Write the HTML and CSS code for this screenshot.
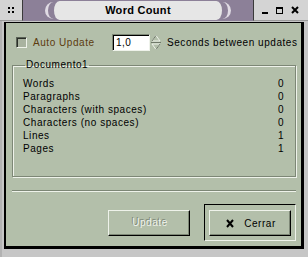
FILE: index.html
```html
<!DOCTYPE html>
<html lang="en">
<head>
    <meta charset="UTF-8">
    <title>Word Count</title>
    <link rel="stylesheet" href="styles.css">
</head>
<body>
    <div class="window">
        <div class="titlebar">
            <div class="tb-left">
                <span class="dots"><i></i><i></i><i></i><i></i></span>
            </div>
            <div class="tb-mid">
                <div class="pill">Word Count</div>
            </div>
            <div class="tb-right">
                <span class="ico-min"></span>
                <span class="ico-max"></span>
                <svg class="ico-close" width="8" height="8" viewBox="0 0 8 8">
                    <path d="M1 1L7 7M7 1L1 7" stroke="#000" stroke-width="2"/>
                </svg>
            </div>
        </div>

        <div class="frame-wrap">
            <div class="client">
                <div class="top-row">
                    <span class="checkbox"></span>
                    <span class="auto-label">Auto Update</span>
                    <span class="entry">1,0</span>
                    <svg class="spin" width="10" height="17" viewBox="0 0 10 17">
                        <path d="M5 1.5L9 7H1Z" fill="none" stroke="#eef2ea"/>
                        <path d="M5 1.5L1 7" stroke="#6f7869"/>
                        <path d="M0 8.5H10" stroke="#6f7869"/>
                        <path d="M1 10H9L5 15.5Z" fill="none" stroke="#eef2ea"/>
                        <path d="M9 10L5 15.5" stroke="#6f7869"/>
                    </svg>
                    <span class="seconds">Seconds between updates</span>
                </div>

                <fieldset class="doc">
                    <legend>Documento1</legend>
                    <div class="row"><span>Words</span><span>0</span></div>
                    <div class="row"><span>Paragraphs</span><span>0</span></div>
                    <div class="row"><span>Characters (with spaces)</span><span>0</span></div>
                    <div class="row"><span>Characters (no spaces)</span><span>0</span></div>
                    <div class="row"><span>Lines</span><span>1</span></div>
                    <div class="row"><span>Pages</span><span>1</span></div>
                </fieldset>

                <div class="separator"></div>

                <div class="buttons">
                    <button class="btn disabled">Update</button>
                    <div class="default-ring">
                        <button class="btn">
                            <svg width="8" height="9" viewBox="0 0 8 9">
                                <path d="M1 1L7 8M7 1L1 8" stroke="#000" stroke-width="2"/>
                            </svg>
                            <span>Cerrar</span>
                        </button>
                    </div>
                </div>
            </div>
        </div>
    </div>
</body>
</html>
```

FILE: styles.css
```css
* {
    box-sizing: border-box;
    margin: 0;
    padding: 0;
}

body {
    width: 308px;
    height: 257px;
    overflow: hidden;
    font-family: "Liberation Sans", Arial, sans-serif;
    font-size: 10px;
    letter-spacing: 0.55px;
    color: #000;
}

.window {
    width: 308px;
    height: 257px;
    background: #c6c6c6;
}

/* title bar */
.titlebar {
    display: flex;
    height: 21px;
}

.tb-left {
    width: 23px;
    background: #d4d4d4;
    border-right: 1px solid #3a3a3a;
    border-bottom: 1px solid #9a9a9a;
    display: flex;
    align-items: center;
    justify-content: center;
}

.dots {
    display: grid;
    grid-template-columns: 2px 2px;
    gap: 2px;
}

.dots i {
    width: 2px;
    height: 2px;
    background: #000;
}

.tb-mid {
    flex: 1;
    background: #8c8098;
    display: flex;
    align-items: center;
    justify-content: center;
}

.pill {
    position: relative;
    width: 168px;
    height: 19px;
    background: #e6e6e6;
    border-radius: 7px / 12px;
    font-size: 11px;
    font-weight: bold;
    letter-spacing: 0.3px;
    line-height: 19px;
    text-align: center;
}

.pill::before,
.pill::after {
    content: "";
    position: absolute;
    top: 1px;
    width: 14px;
    height: 17px;
    border-radius: 50%;
}

.pill::before {
    left: -9px;
    border-left: 3px solid #e0dbe4;
}

.pill::after {
    right: -9px;
    border-right: 3px solid #e0dbe4;
}

.tb-right {
    width: 55px;
    background: #d4d4d4;
    border-left: 1px solid #3a3a3a;
    border-bottom: 1px solid #9a9a9a;
    display: flex;
    align-items: center;
    padding-left: 8px;
    gap: 7px;
}

.ico-min {
    width: 6px;
    height: 2px;
    margin-top: 6px;
    background: #000;
}

.ico-max {
    width: 7px;
    height: 7px;
    border: 1px solid #000;
    border-top-width: 2px;
    margin-left: 1px;
}

.ico-close {
    margin-left: 1px;
}

/* frame */
.frame-wrap {
    height: 236px;
    padding: 1px 4px 8px 2px;
    background: #c6c6c6;
    border-left: 2px solid #b2b2b2;
}

.client {
    height: 227px;
    background: #b3bfaa;
    border-left: 2px solid #000;
    border-top: 1px solid #000;
    border-right: 3px solid #000;
    border-bottom: 3px solid #000;
    padding: 11px 5px 0 6px;
}

.top-row {
    display: flex;
    align-items: center;
    height: 17px;
    white-space: nowrap;
}

.checkbox {
    flex-shrink: 0;
    width: 11px;
    height: 11px;
    margin-left: 4px;
    background: #a9b3a0;
    border: 1px solid #eef2ea;
    border-top-color: #5a6256;
    border-left-color: #5a6256;
    box-shadow: inset 1px 1px 0 #2a2e28;
}

.auto-label {
    flex-shrink: 0;
    margin-left: 6px;
    color: #5c3b0e;
    width: 79px;
}

.entry {
    flex-shrink: 0;
    width: 38px;
    height: 17px;
    background: #fff;
    border: 1px solid #eef2ea;
    border-top-color: #7d8776;
    border-left-color: #7d8776;
    box-shadow: inset 1px 1px 0 #000;
    padding: 2px 0 0 3px;
    line-height: 12px;
    letter-spacing: 0.4px;
}

.spin {
    flex-shrink: 0;
    margin-left: 1px;
}

.seconds {
    margin-left: 6px;
}

.doc {
    margin-top: 8px;
    border: 1px solid #7d8776;
    box-shadow: inset 1px 1px 0 #eef2ea, 1px 1px 0 #eef2ea;
    padding: 6px 11px 21px 10px;
    height: 118px;
}

.doc legend {
    margin-left: 2px;
    padding: 0 1px;
    line-height: 12px;
}

.row {
    display: flex;
    justify-content: space-between;
    height: 13px;
    line-height: 13px;
}

.separator {
    margin-top: 13px;
    height: 2px;
    border-top: 1px solid #7d8776;
    border-bottom: 1px solid #eef2ea;
}

.buttons {
    display: flex;
    justify-content: flex-end;
    align-items: center;
    gap: 14px;
    margin-top: 12px;
}

.btn {
    width: 82px;
    height: 26px;
    background: #b3bfaa;
    border: 1px solid #000;
    border-top-color: #eef2ea;
    border-left-color: #eef2ea;
    box-shadow: inset -1px -1px 0 #7d8776;
    font-family: "Liberation Sans", Arial, sans-serif;
    font-size: 10px;
    letter-spacing: 0.55px;
    color: #000;
    display: flex;
    align-items: center;
    justify-content: center;
    gap: 10px;
    padding-left: 2px;
}

.btn.disabled {
    color: #eef2ea;
    text-shadow: -1px -1px 0 #7d8776;
}

.default-ring {
    width: 92px;
    height: 37px;
    border: 1px solid #eef2ea;
    border-top-color: #000;
    border-left-color: #000;
    padding: 5px 4px 4px 4px;
}
```
